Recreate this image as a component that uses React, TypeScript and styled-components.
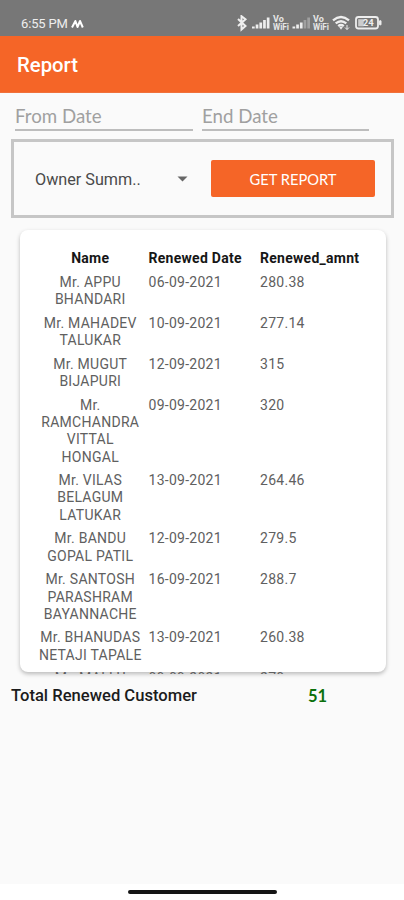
import React from "react";
import styled, { createGlobalStyle } from "styled-components";

const GlobalStyle = createGlobalStyle`
  * { box-sizing: border-box; }
  body { margin: 0; background: #fafafa; font-family: Roboto, sans-serif; }
`;

const Screen = styled.div`
  width: 404px;
  height: 900px;
  display: flex;
  flex-direction: column;
  background: #fafafa;
  overflow: hidden;
`;

const StatusBar = styled.div`
  height: 36px;
  flex: none;
  display: flex;
  justify-content: space-between;
  align-items: flex-start;
  padding: 15px 21px 0 21px;
  background: #777;
  color: #eee;
`;

const Clock = styled.div`
  display: flex;
  align-items: center;
  gap: 3px;
  height: 17px;
  font-size: 13px;
  letter-spacing: -0.15px;
  white-space: nowrap;
`;

const StatusIcons = styled.div`
  display: flex;
  height: 16px;
`;

const AppBar = styled.header`
  height: 57px;
  flex: none;
  display: flex;
  align-items: center;
  padding: 1px 17px 0;
  background: #f56527;
  border-bottom: 1px solid #f0713c;
  color: #fff;
  font-size: 20.3px;
  font-weight: 500;
`;

const DateRow = styled.div`
  height: 46px;
  flex: none;
  display: flex;
  gap: 9px;
  padding: 9px 0 0 15px;
`;

const DateField = styled.div<{ $width: number }>`
  width: ${(p) => p.$width}px;
  height: 29px;
  border-bottom: 2px solid #bdbdbd;
  color: #a0a0a0;
  font: 18.7px/28px Lato, sans-serif;
`;

const FilterBox = styled.div`
  width: 383px;
  height: 79px;
  flex: none;
  display: flex;
  align-items: center;
  margin-left: 11px;
  padding-left: 21px;
  border: 3px solid #c6c6c6;
`;

const Select = styled.div`
  width: 176px;
  display: flex;
  align-items: center;
  justify-content: space-between;
  padding: 1px 23px 0 0;
  color: #4a4a4a;
  font-size: 16.2px;
`;

const GetButton = styled.button`
  width: 164px;
  height: 37px;
  border: 0;
  border-radius: 2px;
  padding: 0;
  background: #f56527;
  color: #fff;
  font: 14.7px/20px Lato, sans-serif;
`;

const Card = styled.section`
  width: 366px;
  height: 442px;
  flex: none;
  margin: 12px 0 0 20px;
  border-radius: 8px;
  background: #fff;
  box-shadow: 0 2px 4px rgba(0, 0, 0, 0.26);
`;

const RecordList = styled.div`
  height: 444px;
  padding-top: 19.5px;
  overflow: hidden;
`;

const Row = styled.div<{ $head?: boolean }>`
  display: grid;
  grid-template-columns: 106.5px 111.5px 1fr;
  padding-left: 17px;
  margin-bottom: ${(p) => (p.$head ? 7.2 : 6.3)}px;
  color: ${(p) => (p.$head ? "#161616" : "#606060")};
  font-size: 14px;
  font-weight: ${(p) => (p.$head ? 700 : 400)};
  line-height: 17.3px;
  letter-spacing: 0.27px;
`;

const NameCell = styled.div`
  text-align: center;
  white-space: pre;
`;

const Cell = styled.div`
  padding-left: 5px;
`;

const Summary = styled.div`
  flex: 1;
  display: flex;
  padding: 14px 0 0 11px;
  line-height: 20px;
`;

const TotalLabel = styled.div`
  width: 297px;
  color: #1c1c1c;
  font-size: 16.6px;
  font-weight: 500;
`;

const TotalValue = styled.div`
  color: #0b700b;
  font-family: Lato, sans-serif;
  font-size: 16.5px;
  font-weight: 700;
`;

const NavBar = styled.div`
  height: 16px;
  flex: none;
  display: flex;
  justify-content: center;
  padding-top: 6px;
  background: #fff;
`;

const HomeHandle = styled.div`
  width: 149px;
  height: 4px;
  border-radius: 2px;
  background: #151515;
`;

const customers = [
  { name: "Mr. APPU\nBHANDARI", date: "06-09-2021", amount: "280.38" },
  { name: "Mr. MAHADEV\nTALUKAR", date: "10-09-2021", amount: "277.14" },
  { name: "Mr. MUGUT\nBIJAPURI", date: "12-09-2021", amount: "315" },
  { name: "Mr.\nRAMCHANDRA\nVITTAL\nHONGAL", date: "09-09-2021", amount: "320" },
  { name: "Mr. VILAS\nBELAGUM\nLATUKAR", date: "13-09-2021", amount: "264.46" },
  { name: "Mr. BANDU\nGOPAL PATIL", date: "12-09-2021", amount: "279.5" },
  { name: "Mr. SANTOSH\nPARASHRAM\nBAYANNACHE", date: "16-09-2021", amount: "288.7" },
  { name: "Mr. BHANUDAS\nNETAJI TAPALE", date: "13-09-2021", amount: "260.38" },
  { name: "Mr. MALLU", date: "09-09-2021", amount: "270" },
];

const Signal = ({ x, level }: { x: number; level: number }) => (
  <g fill="#eee">
    {[2, 4, 6, 8.5, 11].map((h, i) => (
      <rect key={i} x={x + i * 3.7} y={13.5 - h} width="2.7" height={h} opacity={i < level ? 1 : 0.35} />
    ))}
  </g>
);

const VoWifi = ({ x }: { x: number }) => (
  <g fill="#e6e6e6" fontFamily="Roboto, sans-serif" fontWeight="700">
    <text x={x} y="7" fontSize="9">Vo</text>
    <text x={x} y="14.6" fontSize="9" textLength="16" lengthAdjust="spacingAndGlyphs">WiFi</text>
  </g>
);

const StatusGlyphs = () => (
  <svg width="146" height="17" viewBox="0 0 146 17" fill="none">
    <path d="M1 4l7.5 7-4 3.5V1.2L8.5 4.3 1 11" stroke="#eee" strokeWidth="2" />
    <Signal x={15} level={5} />
    <VoWifi x={36} />
    <Signal x={55.5} level={3} />
    <VoWifi x={76} />
    <g stroke="#eee" strokeWidth="2.3">
      <path d="M96 5.4Q104 -1.3 112 5.4" />
      <path d="M98.7 8.4Q104 4 109.3 8.4" />
      <path d="M101.2 11.2Q104 8.9 106.8 11.2" />
    </g>
    <path d="M102 11.7h4l-2 3z" fill="#eee" />
    <path d="M110 10v4.5M108 12.5l2 2 2-2" stroke="#eee" strokeWidth="1" />
    <rect x="119" y="2" width="22" height="11.5" rx="2.5" stroke="#eee" strokeWidth="1.8" />
    <path d="M142.6 5.8h1.4v4h-1.4z" fill="#eee" stroke="#eee" />
    <rect x="121.2" y="4.2" width="5.5" height="7.1" fill="#ccc" />
    <text x="125.8" y="11.2" fill="#eee" fontSize="9.5" fontWeight="700" fontFamily="Roboto, sans-serif">24</text>
  </svg>
);

export default function App() {
  return (
    <>
      <GlobalStyle />
      <Screen>
        <StatusBar>
          <Clock>
            6:55 PM
            <svg width="13" height="10" viewBox="0 0 13 10" fill="none">
              <path d="M1 8.5L4.4 2l2.1 6L9 2l2.8 6.5" stroke="#fff" strokeWidth="2" strokeLinejoin="round" />
            </svg>
          </Clock>
          <StatusIcons>
            <StatusGlyphs />
          </StatusIcons>
        </StatusBar>
        <AppBar>Report</AppBar>
        <DateRow>
          <DateField $width={178}>From Date</DateField>
          <DateField $width={167}>End Date</DateField>
        </DateRow>
        <FilterBox>
          <Select>
            Owner Summ..
            <svg width="11" height="6" viewBox="0 0 11 6">
              <path d="M0.5 0.5h10l-5 5z" fill="#666" />
            </svg>
          </Select>
          <GetButton>GET REPORT</GetButton>
        </FilterBox>
        <Card>
          <RecordList>
            <Row $head>
              <NameCell>Name</NameCell>
              <Cell>Renewed Date</Cell>
              <Cell>Renewed_amnt</Cell>
            </Row>
            {customers.map((c) => (
              <Row key={c.name}>
                <NameCell>{c.name}</NameCell>
                <Cell>{c.date}</Cell>
                <Cell>{c.amount}</Cell>
              </Row>
            ))}
          </RecordList>
        </Card>
        <Summary>
          <TotalLabel>Total Renewed Customer</TotalLabel>
          <TotalValue>51</TotalValue>
        </Summary>
        <NavBar>
          <HomeHandle />
        </NavBar>
      </Screen>
    </>
  );
}
